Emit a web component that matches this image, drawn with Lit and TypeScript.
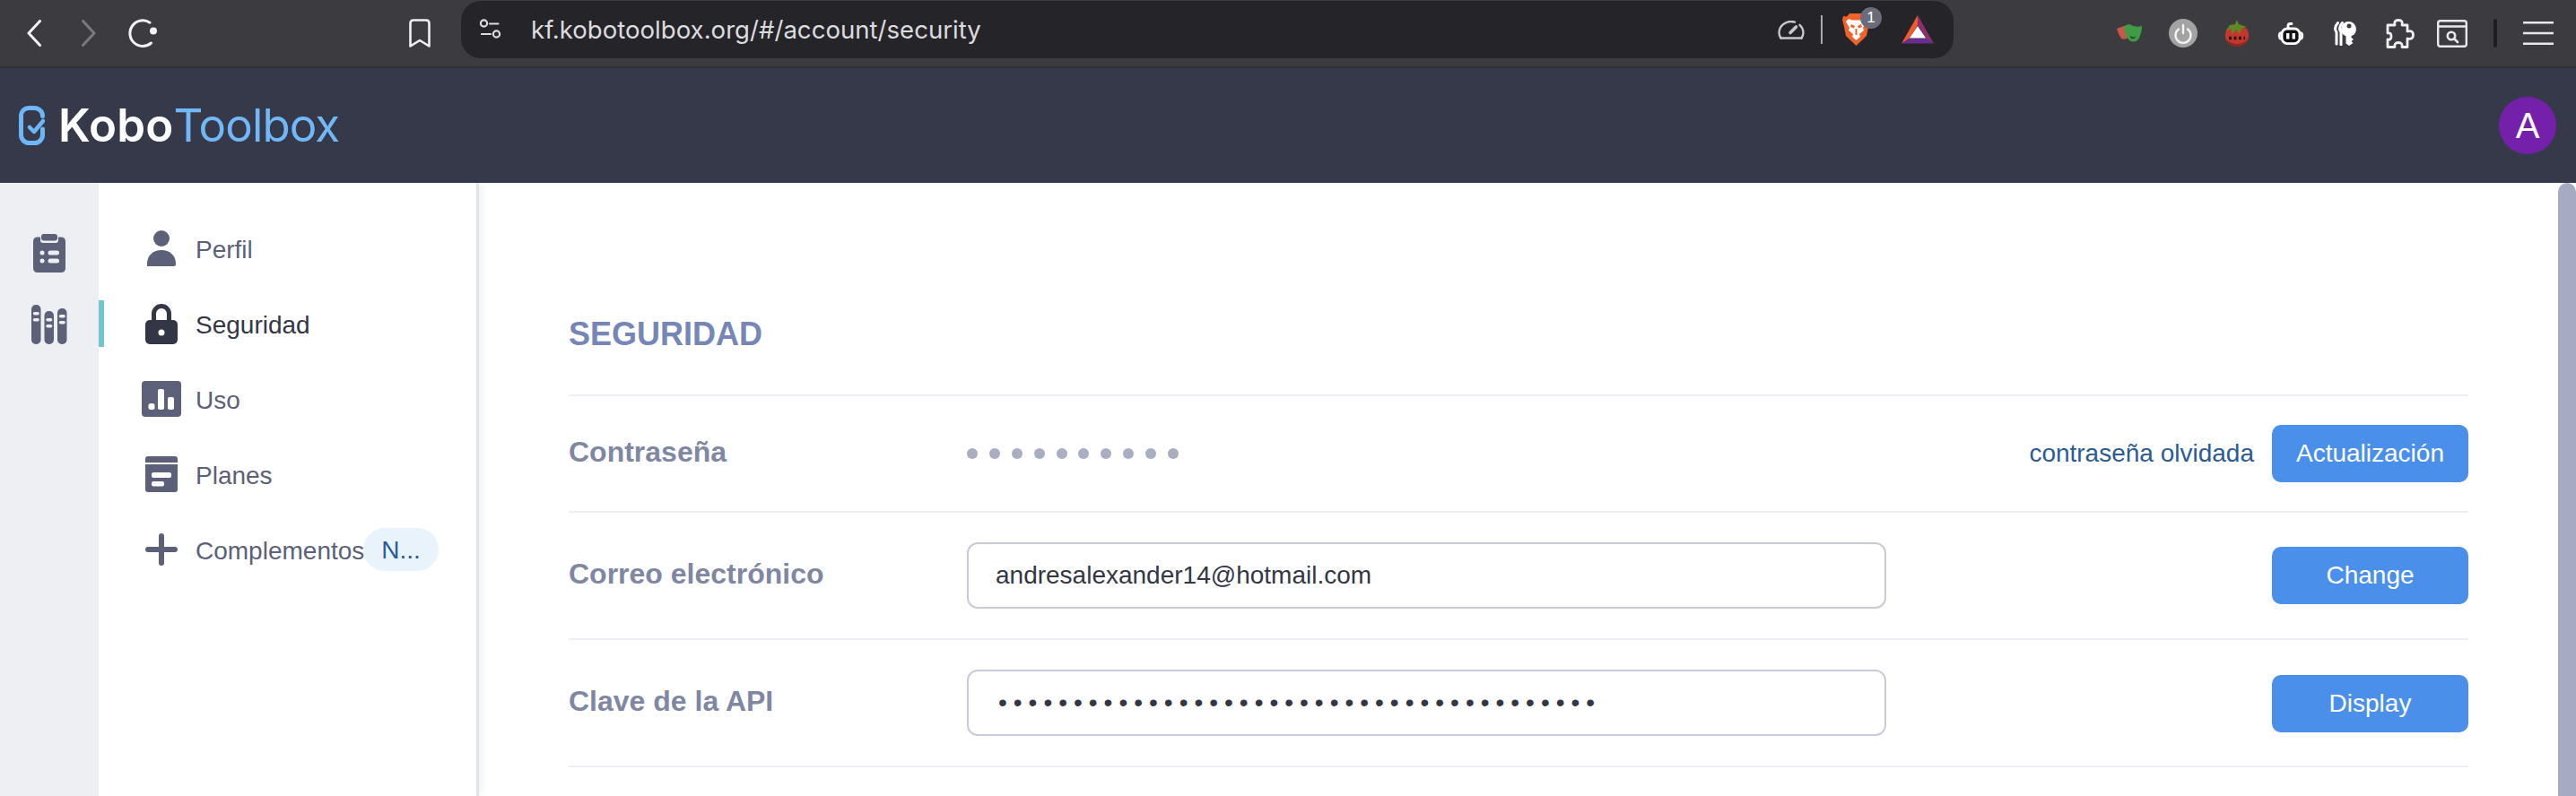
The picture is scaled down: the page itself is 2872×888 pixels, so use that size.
import { LitElement, html, css, svg } from "lit";
import { customElement } from "lit/decorators.js";

const icoNav = {
  person: html`<svg width="32" height="40" viewBox="0 0 32 40"><circle cx="16" cy="9" r="9"/><path d="M0 40V37C0 28 7 22 16 22S32 28 32 37V38Q32 40 30 40Z"/></svg>`,
  lock: html`<svg width="36" height="45" viewBox="0 0 36 45"><path d="M9.5 20V11A8.5 8.5 0 0 1 26.5 11V20" fill="none" stroke="currentColor" stroke-width="5"/><rect y="18" width="36" height="27" rx="5"/><circle cx="18" cy="32" r="3.5" fill="#fff"/></svg>`,
  usage: html`<svg width="44" height="40" viewBox="0 0 44 40"><rect width="44" height="40" rx="4"/><g fill="#fff"><rect x="7.5" y="25" width="7" height="7" rx="2.5"/><rect x="18" y="9" width="7" height="23" rx="2"/><rect x="29" y="18" width="7" height="14" rx="2"/></g></svg>`,
  plans: html`<svg width="36" height="40" viewBox="0 0 36 40"><path d="M0 7V3Q0 0 3 0H33Q36 0 36 3V7Z"/><path d="M0 9H36V37Q36 40 33 40H3Q0 40 0 37Z"/><g fill="#fff"><rect x="7" y="18" width="22" height="6" rx="2"/><rect x="7" y="28" width="14" height="5.5" rx="2"/></g></svg>`,
  plus: html`<svg width="36" height="36" viewBox="0 0 36 36"><rect y="15" width="36" height="6" rx="3"/><rect x="15" width="6" height="36" rx="3"/></svg>`,
};

const navItems = [
  { label: "Perfil", icon: icoNav.person },
  { label: "Seguridad", icon: icoNav.lock, active: true },
  { label: "Uso", icon: icoNav.usage },
  { label: "Planes", icon: icoNav.plans },
  { label: "Complementos", icon: icoNav.plus, badge: "N..." },
];

const dash = (x: number, y: number, w = 7) => svg`<rect x=${x} y=${y} width=${w} height="3.5" rx="1.7" fill="#eeeff3"/>`;

@customElement("app-root")
export class AppRoot extends LitElement {
  static styles = css`
    :host { display: block; width: 2872px; height: 888px; overflow: hidden; background: #fff; font-family: "Liberation Sans", Arial, sans-serif; }
    svg { display: block; flex: none; }

    .toolbar { display: flex; align-items: center; height: 74px; background: #3c3b40; border-bottom: 2px solid #302f34; box-sizing: content-box; }
    .back { margin-left: 30px; }
    .fwd { margin-left: 45px; }
    .reload { margin-left: 36px; }
    .bookmark { margin-left: 281px; }
    .urlbar { display: flex; align-items: center; width: 1664px; height: 64px; margin: -8px 0 0 34px; background: #252429; border-radius: 22px; color: #dcdcdf; }
    .tune { margin-left: 21px; }
    .url { flex: 1; margin-left: 33px; font: 400 27.6px Inter, "Liberation Sans", sans-serif; white-space: nowrap; }
    .gauge { margin-right: 18px; }
    .usep { width: 2px; height: 32px; background: #a9a9ad; margin-right: 22px; }
    .brave { position: relative; width: 31px; height: 36px; margin-right: 35px; }
    .count { position: absolute; left: 20px; top: -7px; width: 24px; height: 24px; border-radius: 50%; background: #6a6c7a; color: #fff; font-size: 17px; line-height: 24px; text-align: center; }
    .bat { margin-right: 22px; }
    .masks { margin-left: 182px; }
    .power { margin-left: 30px; }
    .tomato { margin-left: 31px; }
    .robot { margin-left: 32px; }
    .keys { margin-left: 33px; }
    .puzzle { margin-left: 32px; }
    .window { margin-left: 25px; }
    .tsep { width: 4px; height: 32px; margin-left: 29px; border-radius: 2px; background: #1f1f23; }
    .burger { margin-left: 29px; }

    .header { display: flex; align-items: center; justify-content: space-between; height: 128px; background: #363949; padding: 0 22px 0 21px; }
    .logo { display: flex; align-items: center; }
    .word { margin-left: 15px; font: 600 51px/1 Inter, "Liberation Sans", sans-serif; color: #fff; letter-spacing: 0.2px; white-space: nowrap; position: relative; top: -1px; }
    .word span { font-weight: 400; color: #72b8f8; letter-spacing: -0.9px; }
    .avatar { width: 64px; height: 64px; border-radius: 50%; background: #7420ab; color: #fff; font: 400 40px/64px "Liberation Sans", sans-serif; text-align: center; }

    .body { display: flex; height: 684px; }
    .rail { flex: none; width: 110px; background: #eeeff3; display: flex; flex-direction: column; align-items: center; padding-top: 57px; gap: 36px; box-sizing: border-box; color: #5c6078; fill: currentColor; }
    .nav { flex: none; box-sizing: border-box; padding-top: 31px; border-right: 3px solid #e1e3eb; width: 424px; box-shadow: 4px 0 7px rgba(40, 44, 70, 0.06); position: relative; }
    .item { position: relative; display: flex; align-items: center; height: 84px; padding-left: 48px; font-size: 28px; color: #5c6078; fill: currentColor; }
    .item.active { color: #333645; }
    .item.active::before { content: ""; position: absolute; left: 0; top: 16px; width: 6px; height: 52px; background: #71c4d0; }
    .ic { flex: none; width: 44px; display: flex; justify-content: center; margin-right: 16px; }
    .tx { padding-top: 3px; }
    .badge { flex: none; width: 84px; height: 48px; box-sizing: border-box; padding-left: 20px; border-radius: 24px; background: #e8f3fc; color: #2b5b95; line-height: 50px; margin-left: -1px; }

    .main { flex: 1; min-width: 0; box-sizing: border-box; padding: 0 100px 0 100px; }
    h1 { margin: 0; height: 236px; box-sizing: border-box; padding-top: 148px; font: 700 36px/42px "Liberation Sans", sans-serif; color: #7586b7; }
    .row { display: flex; align-items: center; border-top: 2px solid #eeeff3; padding: 33px 0; }
    .row.pw { padding: 32px 0; }
    .row.last { border-bottom: 2px solid #eeeff3; }
    .lbl { flex: none; width: 444px; font: 700 32px "Liberation Sans", sans-serif; color: #7f87a3; position: relative; top: -2px; }
    .dots { display: flex; gap: 12.9px; }
    .dots i { width: 12px; height: 12px; border-radius: 50%; background: #a9aec3; }
    input { flex: none; width: 1025px; height: 74px; box-sizing: border-box; padding: 0 30px; border: 2px solid #c8cbd8; border-radius: 12px; background: #fff; font: 400 28px "Liberation Sans", sans-serif; color: #333645; outline: none; }
    input.secret { letter-spacing: 7px; padding-left: 33px; }
    .grow { flex: 1; }
    .link { font-size: 28px; color: #2b5b95; margin-right: 20px; }
    button { flex: none; width: 219px; height: 64px; border: 0; border-radius: 10px; background: #4a90ea; color: #fff; font: 400 28px "Liberation Sans", sans-serif; padding: 0; }
    .row.last button { margin-top: 2px; }
    .scroll { flex: none; width: 20px; background: #a6abc1; border-radius: 10px 10px 0 0; }
  `;

  render() {
    return html`
      <div class="toolbar">
        <svg class="back" width="16" height="30" viewBox="0 0 16 30" fill="none" stroke="#f2f2f3" stroke-width="3" stroke-linecap="round" stroke-linejoin="round"><path d="M14.5 1.5L2 15L14.5 28.5"/></svg>
        <svg class="fwd" width="16" height="30" viewBox="0 0 16 30" fill="none" stroke="#7b7b7e" stroke-width="3" stroke-linecap="round" stroke-linejoin="round"><path d="M1.5 1.5L14 15L1.5 28.5"/></svg>
        <svg class="reload" width="32" height="32" viewBox="0 0 32 32" fill="none" stroke="#f2f2f3" stroke-width="3" stroke-linecap="round"><path d="M24 4.2A14.3 14.3 0 1 0 25.5 27"/><circle cx="28" cy="13.5" r="4" fill="#f2f2f3" stroke="none"/></svg>
        <svg class="bookmark" width="24" height="32" viewBox="0 0 24 32" fill="none" stroke="#f0f0f1" stroke-width="2.6" stroke-linejoin="round"><path d="M1.5 5Q1.5 1.5 5 1.5H19Q22.5 1.5 22.5 5V30.5L12 24L1.5 30.5Z"/></svg>
        <div class="urlbar">
          <svg class="tune" width="24" height="24" viewBox="0 0 24 24" fill="none" stroke="#dcdcdf" stroke-width="2.2" stroke-linecap="round"><circle cx="4.5" cy="5" r="3.6"/><path d="M11 5.5H20.5M2 17H12"/><circle cx="18.5" cy="17" r="3.6"/></svg>
          <div class="url">kf.kobotoolbox.org/#/account/security</div>
          <svg class="gauge" width="30" height="21" viewBox="0 0 30 21" fill="none" stroke="#c8c8cb" stroke-width="2.4" stroke-linecap="round"><path d="M3.5 19.5H26.500"/><path d="M3.500 19.500Q1.500 16.500 1.500 13.500A13.500 12.500 0 0 1 19 1.600M24.500 4.800A13.500 12.500 0 0 1 28.500 13.500Q28.500 16.500 26.500 19.500"/><path d="M14 13.500L20.500 7" stroke-width="3.600"/></svg>
          <div class="usep"></div>
          <div class="brave">
            <svg width="31" height="36" viewBox="0 0 31 36"><path d="M8 0H23L26 3.500L30 3L31 7L29 15L27 25L15.500 36L4 25L2 15L0 7L1 3L5 3.500Z" fill="#f0622a"/><path d="M7 6L11 7.500H20L24 6L27 9L23 16L24 19L19 23L20 26L15.500 30L11 26L12 23L7 19L8 16L4 9Z" fill="#fff"/><path d="M10 12L14 14L13 16.500L9 15ZM21 12L17 14L18 16.500L22 15ZM14.500 17V24H16.500V17Z" fill="#f0622a"/></svg>
            <div class="count">1</div>
          </div>
          <svg class="bat" width="36" height="32" viewBox="0 0 36 32"><path d="M18 0L36 31.500L27 26L18 11Z" fill="#8e2f6d"/><path d="M18 0L0 31.500L9 26L18 11Z" fill="#ee5a2b"/><path d="M0 31.500L9 25.500H27L36 31.500Z" fill="#692d92"/><path d="M18 12L27 25.500H9Z" fill="#fff"/></svg>
        </div>
        <svg class="masks" width="28" height="20" viewBox="0 0 28 20"><path d="M0 5L11 1L13 15Q8 18 5 16Q2 12 0 5Z" fill="#c9574b"/><path d="M8 3Q12 0 14 0Q21 4 28 2Q28 12 23 18Q19 21 14 18Q9 12 8 3Z" fill="#3f9c46"/><path d="M14 12Q18 16 22 13Q19 18 16 16Z" fill="#1f5a24"/></svg>
        <svg class="power" width="32" height="32" viewBox="0 0 32 32"><circle cx="16" cy="16" r="16" fill="#a3a3a3"/><g fill="none" stroke="#f4f4f4" stroke-width="2.400" stroke-linecap="round"><path d="M11 11.500A8.500 8.500 0 1 0 21 11.500"/><path d="M16 7V16"/></g></svg>
        <svg class="tomato" width="26" height="30" viewBox="0 0 26 30"><path d="M2 10Q13 5 24 10Q26.500 14 26 20Q24 29 13 30Q2 29 0 20Q-.5 14 2 10Z" fill="#c4372c"/><path d="M0.500 22Q13 32 25.500 22Q23 29 13 30Q3 29 0.500 22Z" fill="#8f2a22"/><path d="M13 0L15 5L24 8L18 10L16 16L12.500 11L7 16L7 10L1 12L5 6L11 5Z" fill="#5c8a24"/><path d="M4 20.500H22" stroke="#2a1412" stroke-width="3.500" stroke-dasharray="3 2.500"/></svg>
        <svg class="robot" width="30" height="25" viewBox="0 0 30 25" fill="none" stroke="#fff" stroke-width="2.800" stroke-linecap="round" stroke-linejoin="round"><path d="M12 7V3.500Q12 1.500 14 1.500H16"/><path d="M5 12H3Q1.400 14.500 3 18H5M25 12H27Q28.600 14.500 27 18H25" fill="#111114"/><rect x="5" y="7" width="20" height="16.600" rx="6" fill="#111114"/><rect x="10" y="12" width="3.400" height="6.500" fill="#fff" stroke="none"/><rect x="16.600" y="12" width="3.400" height="6.500" fill="#fff" stroke="none"/></svg>
        <svg class="keys" width="25" height="27" viewBox="0 0 25 27" fill="none" stroke="#fff" stroke-width="3" stroke-linecap="round"><path d="M4.500 1.500Q-.5 7 3 12V25M9.500 1.500Q4.500 7 8 12V26"/><circle cx="16.500" cy="8.500" r="8.500" fill="#fff" stroke="none"/><path d="M13.500 14H19.500V18L22 20L19.500 22L21.500 24L17 27L13.500 24.500Z" fill="#fff" stroke="none"/><circle cx="17" cy="5" r="2.500" fill="#3c3b40" stroke="none"/></svg>
        <svg class="puzzle" width="33" height="33" viewBox="0 0 33 33" fill="none" stroke="#f0f0f1" stroke-width="2.800" stroke-linejoin="round"><path d="M3 7H11Q9.500 1.500 15 1.500Q20.500 1.500 19 7H25V14Q31.500 12.500 31.500 18Q31.500 23.500 25 22V31.500H19Q20 26.500 15 26.500Q10 26.500 11 31.500H3V23Q7 24 7 19.500Q7 15 3 16Z"/></svg>
        <svg class="window" width="34" height="31" viewBox="0 0 34 31" fill="none" stroke="#e8e8ea" stroke-width="2.400" stroke-linecap="round"><rect x="1.200" y="1.200" width="31.600" height="28.600" rx="2.500"/><path d="M1.200 7.500H32.800"/><circle cx="16" cy="18" r="4.200" stroke-width="2.600"/><path d="M19.500 21.500L23 25" stroke-width="2.600"/></svg>
        <div class="tsep"></div>
        <svg class="burger" width="34" height="26" viewBox="0 0 34 26" fill="none" stroke="#e8e8ea" stroke-width="2.600"><path d="M0 1.300H34M0 13H34M0 24.700H34"/></svg>
      </div>

      <div class="header">
        <div class="logo">
          <svg width="29" height="44" viewBox="0 0 29 44" fill="none" stroke="#6fb6f6" stroke-width="5" stroke-linecap="round" stroke-linejoin="round"><path d="M26.500 11.500C26.500 6 22 2.500 17 2.500H11.500C6 2.500 2.500 6.500 2.500 11.500V32.500C2.500 37.500 6.500 41.500 11.500 41.500H17.500C22.500 41.500 26.500 37.500 26.500 32.500V26"/><path d="M12 24L17 29L27 17" stroke-width="4.500"/></svg>
          <div class="word">Kobo<span>Toolbox</span></div>
        </div>
        <div class="avatar">A</div>
      </div>

      <div class="body">
        <div class="rail">
          <svg width="36" height="43" viewBox="0 0 36 43"><path d="M5 3.500H8V7Q8 10 11 10H25Q28 10 28 7V3.500H31Q36 3.500 36 8.500V38Q36 43 31 43H5Q0 43 0 38V8.500Q0 3.500 5 3.500Z"/><rect x="9" width="18" height="7.500" rx="3"/><g fill="#eeeff3"><circle cx="10" cy="21" r="2.500"/><circle cx="10" cy="30" r="2.500"/><rect x="16.500" y="18.500" width="12.500" height="5" rx="2.500"/><rect x="16.500" y="27.500" width="12.500" height="5" rx="2.500"/></g></svg>
          <svg width="40" height="44" viewBox="0 0 40 44"><rect width="10.500" height="44" rx="5"/><rect x="14.500" y="7" width="10.500" height="37" rx="5"/><rect x="29" y="4" width="10.500" height="40" rx="5"/>${dash(1.800, 8)}${dash(1.800, 15)}${dash(16.300, 15)}${dash(16.300, 22)}${dash(30.800, 11)}${dash(30.800, 18)}</svg>
        </div>
        <nav class="nav">
          ${navItems.map(
            (n) => html`<div class="item ${n.active ? "active" : ""}">
              <span class="ic">${n.icon}</span><span class="tx">${n.label}</span>
              ${n.badge ? html`<span class="badge">${n.badge}</span>` : ""}
            </div>`
          )}
        </nav>
        <main class="main">
          <h1>SEGURIDAD</h1>
          <div class="row pw">
            <div class="lbl">Contraseña</div>
            <div class="dots">${Array.from({ length: 10 }, () => html`<i></i>`)}</div>
            <div class="grow"></div>
            <span class="link">contraseña olvidada</span>
            <button>Actualización</button>
          </div>
          <div class="row">
            <div class="lbl">Correo electrónico</div>
            <input readonly .value=${"andresalexander14@hotmail.com"} />
            <div class="grow"></div>
            <button>Change</button>
          </div>
          <div class="row last">
            <div class="lbl">Clave de la API</div>
            <input class="secret" readonly .value=${"•".repeat(40)} />
            <div class="grow"></div>
            <button>Display</button>
          </div>
        </main>
        <div class="scroll"></div>
      </div>
    `;
  }
}
